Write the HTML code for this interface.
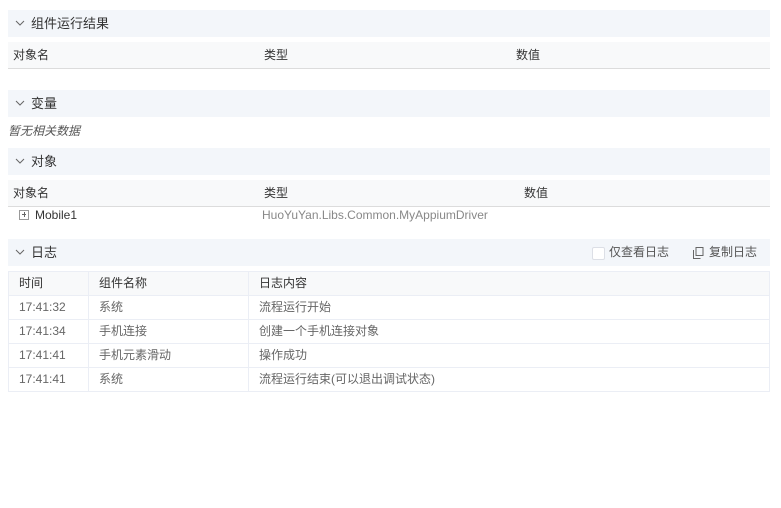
<!DOCTYPE html>
<html><head><meta charset="utf-8"><style>
body{margin:0;width:781px;height:508px;background:#fff;font-family:"Liberation Sans","Noto Sans CJK SC",sans-serif;font-size:12px;color:#333;position:relative;overflow:hidden}
.a{position:absolute}
.hd{position:absolute;left:8px;width:762px;height:27px;background:#f3f6fa;font-size:13px;line-height:27px;color:#333}
.hd svg{position:absolute;left:7px;top:10px}
.hd span.t{position:absolute;left:23px}
.th{position:absolute;left:8px;width:762px;height:26px;background:#f8f9fa;border-bottom:1px solid #dcdcdc;line-height:26px}
.th span{position:absolute}
table{position:absolute;left:8px;top:271px;width:762px;border-collapse:collapse}
td{border:1px solid #ebeef5;height:23px;padding:0 0 0 10px;line-height:23px;color:#666}
tr:first-child td{background:#f8f9fa;color:#333}
</style></head><body>
<div class="hd" style="top:10px"><svg width="10" height="6"><path d="M1 1L5 5L9 1" fill="none" stroke="#666"/></svg><span class="t">组件运行结果</span></div>
<div class="th" style="top:42px"><span style="left:5px">对象名</span><span style="left:256px">类型</span><span style="left:508px">数值</span></div>
<div class="hd" style="top:90px"><svg width="10" height="6"><path d="M1 1L5 5L9 1" fill="none" stroke="#666"/></svg><span class="t">变量</span></div>
<div class="a" style="left:8px;top:122px;font-style:italic;color:#555">暂无相关数据</div>
<div class="hd" style="top:148px"><svg width="10" height="6"><path d="M1 1L5 5L9 1" fill="none" stroke="#666"/></svg><span class="t">对象</span></div>
<div class="th" style="top:180px"><span style="left:5px">对象名</span><span style="left:256px">类型</span><span style="left:516px">数值</span></div>
<div class="a" style="left:19px;top:210px;width:8px;height:8px;border:1px solid #999"></div>
<div class="a" style="left:22px;top:214px;width:4px;height:1px;background:#666"></div>
<div class="a" style="left:23.5px;top:212px;width:1px;height:5px;background:#666"></div>
<div class="a" style="left:35px;top:208px">Mobile1</div>
<div class="a" style="left:262px;top:208px;color:#888">HuoYuYan.Libs.Common.MyAppiumDriver</div>
<div class="hd" style="top:239px"><svg width="10" height="6"><path d="M1 1L5 5L9 1" fill="none" stroke="#666"/></svg><span class="t">日志</span>
<span class="a" style="left:584px;top:8px;width:11px;height:11px;border:1px solid #dcdfe6;border-radius:2px;background:#fff"></span>
<span class="a" style="left:601px;font-size:12px;color:#555">仅查看日志</span>
<svg width="11" height="12" style="left:685px;top:8px"><rect x="3" y="0.5" width="7" height="8" fill="none" stroke="#666"/><path d="M0.5 3V11.5H7.5" fill="none" stroke="#666"/></svg>
<span class="a" style="left:701px;font-size:12px;color:#555">复制日志</span></div>
<table>
<tr><td style="width:69px">时间</td><td style="width:149px">组件名称</td><td>日志内容</td></tr>
<tr><td>17:41:32</td><td>系统</td><td>流程运行开始</td></tr>
<tr><td>17:41:34</td><td>手机连接</td><td>创建一个手机连接对象</td></tr>
<tr><td>17:41:41</td><td>手机元素滑动</td><td>操作成功</td></tr>
<tr><td>17:41:41</td><td>系统</td><td>流程运行结束(可以退出调试状态)</td></tr>
</table>
</body></html>
